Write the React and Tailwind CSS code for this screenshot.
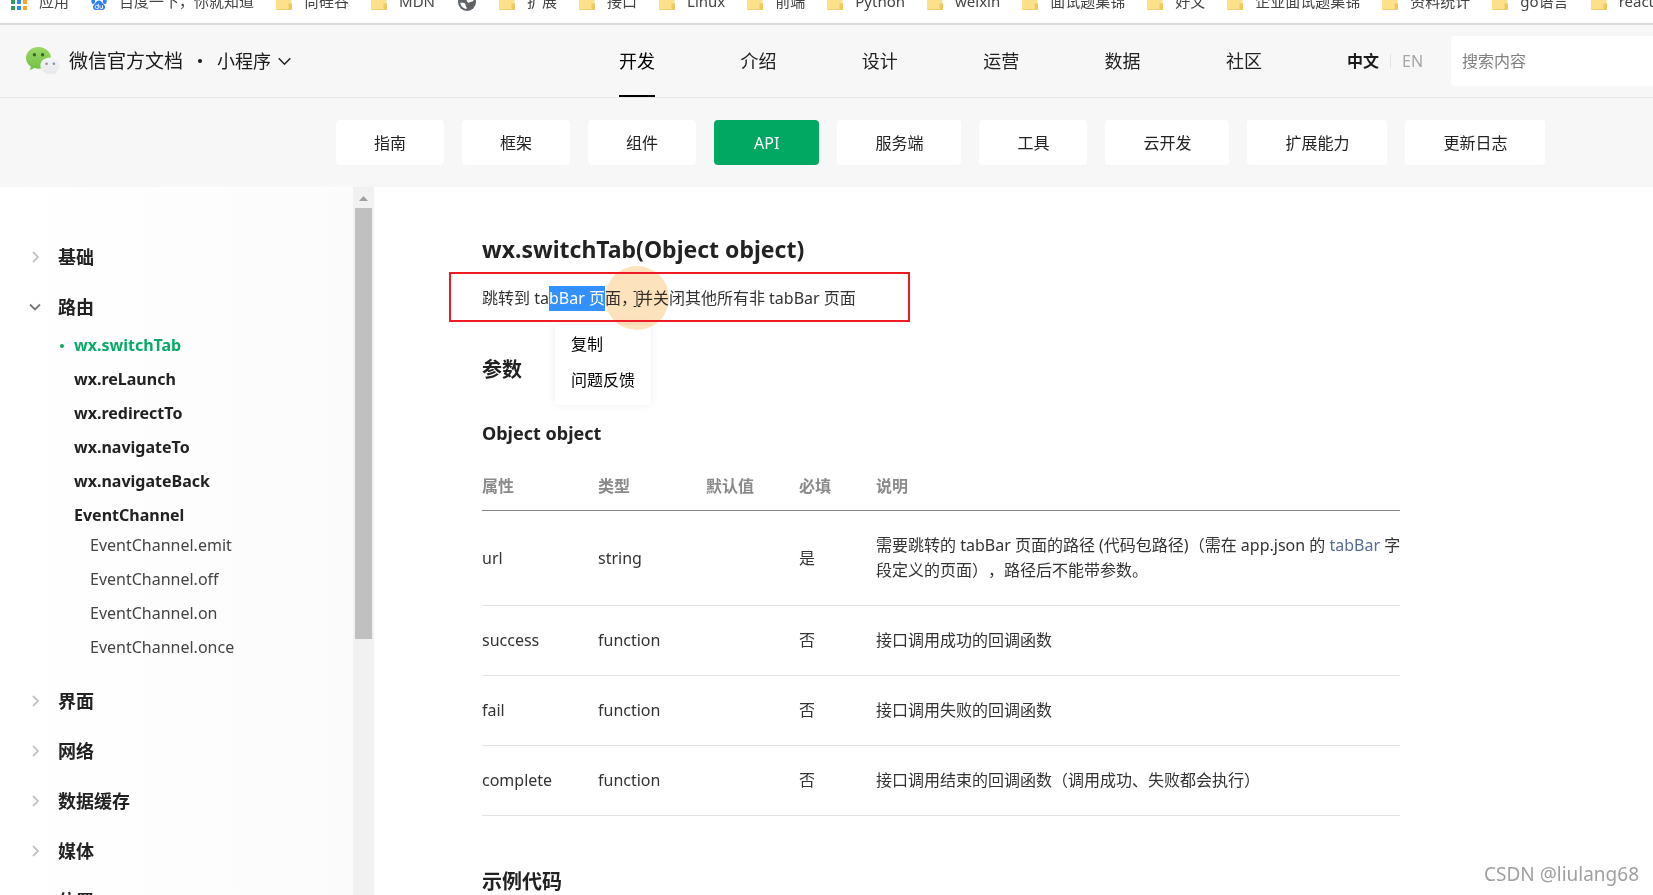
import React from "react";

const bookmarks = [
  { icon: "apps", label: "应用" },
  { icon: "baidu", label: "百度一下，你就知道" },
  { icon: "folder", label: "尚硅谷" },
  { icon: "folder", label: "MDN" },
  { icon: "globe", label: "" },
  { icon: "folder", label: "扩展" },
  { icon: "folder", label: "接口" },
  { icon: "folder", label: "Linux" },
  { icon: "folder", label: "前端" },
  { icon: "folder", label: "Python" },
  { icon: "folder", label: "weixin" },
  { icon: "folder", label: "面试题集锦" },
  { icon: "folder", label: "好文" },
  { icon: "folder", label: "企业面试题集锦" },
  { icon: "folder", label: "资料统计" },
  { icon: "folder", label: "go语言" },
  { icon: "folder", label: "react" },
];

const mainNav = ["开发", "介绍", "设计", "运营", "数据", "社区"];

const subNav = ["指南", "框架", "组件", "API", "服务端", "工具", "云开发", "扩展能力", "更新日志"];

const routeItems = [
  "wx.switchTab",
  "wx.reLaunch",
  "wx.redirectTo",
  "wx.navigateTo",
  "wx.navigateBack",
  "EventChannel",
];

const channelItems = [
  "EventChannel.emit",
  "EventChannel.off",
  "EventChannel.on",
  "EventChannel.once",
];

const laterGroups = ["界面", "网络", "数据缓存", "媒体", "位置"];

const params = [
  {
    name: "url",
    type: "string",
    required: "是",
    desc: (
      <>
        <span className="whitespace-nowrap">
          需要跳转的 tabBar 页面的路径 (代码包路径)（需在 app.json 的{" "}
          <a href="#tabBar" className="text-[#576b95]">tabBar</a> 字
        </span>
        <br />
        段定义的页面），路径后不能带参数。
      </>
    ),
  },
  { name: "success", type: "function", required: "否", desc: "接口调用成功的回调函数" },
  { name: "fail", type: "function", required: "否", desc: "接口调用失败的回调函数" },
  { name: "complete", type: "function", required: "否", desc: "接口调用结束的回调函数（调用成功、失败都会执行）" },
];

function BookmarkIcon({ kind }) {
  if (kind === "apps") {
    const colors = ["#2f9e5b", "#2f9e5b", "#f5a623", "#2f9e5b", "#2b8cf0", "#f5a623", "#2f9e5b", "#2b8cf0", "#f5a623"];
    return (
      <svg width="16" height="16" viewBox="0 0 16 16" aria-hidden="true">
        {colors.map((c, i) => (
          <rect key={i} x={(i % 3) * 6} y={Math.floor(i / 3) * 6} width="4" height="4" fill={c} />
        ))}
      </svg>
    );
  }
  if (kind === "baidu") {
    return (
      <svg width="16" height="16" viewBox="0 0 16 16" fill="#2b7df5" aria-hidden="true">
        <ellipse cx="2.2" cy="7.6" rx="1.9" ry="2.5" />
        <ellipse cx="5.6" cy="3" rx="1.8" ry="2.6" />
        <ellipse cx="10.2" cy="3" rx="1.8" ry="2.6" />
        <ellipse cx="13.8" cy="7.6" rx="1.9" ry="2.5" />
        <path d="M8 6.6c2 0 2.6 1.6 3.8 2.8 1.5 1.4 2.6 2.4 2.2 4.400-.4 1.800-2 2.200-3.500 2.100-1-.1-1.600-.2-2.500-.2s-1.500.1-2.500.2c-1.500.1-3.100-.3-3.500-2.100-.4-2 .7-3 2.200-4.400C5.400 8.200 6 6.600 8 6.600z" />
        <path d="M7.300 9.600v4.800H5.600a1.500 1.500 0 0 1 0-3h1.700M9 11.400v2.200c0 .6.300.8.800.8h1.700v-3" fill="none" stroke="#fff" strokeWidth="0.900" />
      </svg>
    );
  }
  if (kind === "globe") {
    return (
      <svg className="mx-px" width="18" height="18" viewBox="0 0 18 18" aria-hidden="true">
        <circle cx="9" cy="9" r="9" fill="#5f6368" />
        <path d="M2.300 9.500c2 .3 3.800 0 4.900 1.200.9 1 0 2 .9 2.800.6.600.6 1.600.5 2.500-3.400-.3-6-3-6.300-6.500z" fill="#fff" />
        <path d="M8.600 6.800c.2-1.600 1.600-1.400 2.400-2.800.5-.8 1.800-.6 2.600.1 1 1 1.700 2.200 2 3.500-1.500 1.800-3.300.9-4.400 1.900-1 .9-2.800-1-2.600-2.700z" fill="#fff" />
      </svg>
    );
  }
  return (
    <svg width="16" height="16" viewBox="0 0 16 16" aria-hidden="true">
      <path d="M1 0h9l2 2h3.500v14H1a1 1 0 0 1-1-1V1a1 1 0 0 1 1-1z" fill="#fce08a" />
      <path d="M12.500 9.500h3.500V15a1 1 0 0 1-1 1h-3.500l1-1z" fill="#efc75e" />
      <path d="M0 15h12.500v1H1a1 1 0 0 1-1-1z" fill="#f3d072" />
    </svg>
  );
}

function WechatLogo() {
  return (
    <svg width="34" height="28" viewBox="0 0 34 28" aria-hidden="true">
      <defs>
        <linearGradient id="bubbleGreen" x1="0" y1="0" x2="0" y2="1">
          <stop offset="0" stopColor="#9ad766" />
          <stop offset="1" stopColor="#74c044" />
        </linearGradient>
        <linearGradient id="bubbleGray" x1="0" y1="0" x2="0" y2="1">
          <stop offset="0" stopColor="#f3f4f6" />
          <stop offset="1" stopColor="#e6e8ed" />
        </linearGradient>
      </defs>
      <path d="M12.500 0C5.600 0 0 4.900 0 11c0 3.500 1.900 6.600 4.900 8.600L4 23.200l4.300-2.100c1.300.4 2.700.6 4.200.6C19.400 21.700 25 17 25 11S19.400 0 12.500 0z" fill="url(#bubbleGreen)" />
      <circle cx="8.400" cy="7.700" r="1.700" fill="#3c6425" />
      <circle cx="16.600" cy="7.700" r="1.700" fill="#3c6425" />
      <path d="M24 10.500c-5.400 0-9.600 3.600-9.600 8.200s4.200 8.200 9.600 8.200c1.200 0 2.300-.2 3.300-.5l3.400 1.500-.7-2.900c2.200-1.500 3.600-3.800 3.600-6.300 0-4.600-4.200-8.200-9.600-8.200z" fill="url(#bubbleGray)" />
      <circle cx="20.600" cy="16.700" r="1.300" fill="#8d9096" />
      <circle cx="27.900" cy="16.700" r="1.300" fill="#8d9096" />
    </svg>
  );
}

function Chevron({ open = false }) {
  return open ? (
    <svg width="12" height="12" viewBox="0 0 12 12" fill="none" stroke="#777" strokeWidth="1.800" aria-hidden="true">
      <path d="M1 3.500l5 5 5-5" />
    </svg>
  ) : (
    <svg width="12" height="12" viewBox="0 0 12 12" fill="none" stroke="#c4c4c4" strokeWidth="1.800" aria-hidden="true">
      <path d="M4 1l5 5-5 5" />
    </svg>
  );
}

function GroupButton({ label, open = false }) {
  return (
    <button type="button" aria-expanded={open} className="flex h-[50px] w-full items-center gap-[17px] text-left text-lg font-bold text-[#222]">
      <Chevron open={open} />
      {label}
    </button>
  );
}

function Bookmarks() {
  return (
    <nav aria-label="书签" className="h-[25px] shrink-0 overflow-hidden border-b-2 border-[#dadada] bg-white">
      <ul className="-mt-2 flex h-5 items-center gap-[22px] pl-[11px]">
        {bookmarks.map((b, i) => (
          <li key={i} className="shrink-0">
            <a href="#bookmark" aria-label={b.label || "网页"} className="flex items-center gap-3 text-[15px] leading-5 whitespace-nowrap text-[#444]">
              <BookmarkIcon kind={b.icon} />
              {b.label && <span className="pb-0.5">{b.label}</span>}
            </a>
          </li>
        ))}
      </ul>
    </nav>
  );
}

function Header() {
  return (
    <header className="flex h-[73px] shrink-0 items-center border-b border-[#e7e7e7] bg-[#f7f7f7]">
      <div className="flex w-[619px] shrink-0 items-center pl-[26px]">
        <WechatLogo />
        <a href="#home" className="ml-[9px] text-[19px] text-[#1a1a1a]">微信官方文档</a>
        <span className="mx-[15px] size-1 rounded-full bg-[#1a1a1a]" />
        <button type="button" className="flex items-center gap-[7px] text-lg text-[#1a1a1a]">
          小程序
          <svg width="13" height="9" viewBox="0 0 13 9" fill="none" stroke="#222" strokeWidth="1.500" aria-hidden="true">
            <path d="M0.700 1.200l5.800 6 5.800-6" />
          </svg>
        </button>
      </div>
      <nav className="flex w-[643px] shrink-0 justify-between self-stretch">
        {mainNav.map((n, i) => (
          <a
            key={n}
            href="#nav"
            className={
              i === 0
                ? "flex items-center border-y-2 border-t-transparent border-b-black text-lg text-black"
                : "flex items-center border-y-2 border-transparent text-lg text-[#222]"
            }
          >
            {n}
          </a>
        ))}
      </nav>
      <div className="flex w-[189px] shrink-0 items-center pl-[85px] text-base">
        <button type="button" className="font-bold text-[#1a1a1a]">中文</button>
        <span className="mx-[11px] h-3.5 w-px bg-[#e3e3e3]" />
        <button type="button" className="text-[#a6a6a6]">EN</button>
      </div>
      <input
        type="search"
        aria-label="搜索内容"
        placeholder="搜索内容"
        className="h-[50px] min-w-0 flex-1 rounded-l bg-white px-[11px] text-base placeholder:text-[#808080]"
      />
    </header>
  );
}

function SubNav() {
  return (
    <nav className="flex h-[89px] shrink-0 items-center gap-[18px] bg-[#f7f7f7] pl-[336px]">
      {subNav.map((s) => (
        <a
          key={s}
          href="#section"
          className={
            s === "API"
              ? "flex h-[45px] shrink-0 items-center rounded bg-[#00a862] px-10 text-base text-white"
              : "flex h-[45px] shrink-0 items-center rounded bg-white px-[38px] text-base text-[#222]"
          }
        >
          {s}
        </a>
      ))}
    </nav>
  );
}

function Sidebar() {
  return (
    <aside className="flex w-[374px] shrink-0 overflow-hidden bg-linear-to-r from-white to-[#fbfbfb]">
      <nav className="min-w-0 flex-1 pt-[45px] pl-[29px]">
        <GroupButton label="基础" />
        <GroupButton label="路由" open />
        <ul className="-mt-1 pl-[45px] text-base leading-[34px] font-bold text-[#222]">
          {routeItems.map((r, i) => (
            <li key={r} className="relative">
              {i === 0 && <span className="absolute top-4 -left-3.5 size-1 rounded-full bg-[#07ab66]" />}
              <a href="#api" className={i === 0 ? "text-[#07ab66]" : ""}>{r}</a>
            </li>
          ))}
        </ul>
        <ul className="-mt-1 pb-3 pl-[61px] text-base leading-[34px] text-[#444]">
          {channelItems.map((c) => (
            <li key={c}>
              <a href="#channel">{c}</a>
            </li>
          ))}
        </ul>
        {laterGroups.map((g) => (
          <GroupButton key={g} label={g} />
        ))}
      </nav>
      <div className="flex w-[21px] flex-col items-center bg-[#f1f1f1]" aria-hidden="true">
        <svg width="17" height="21" viewBox="0 0 17 21">
          <path d="M4 14l4.500-5 4.500 5z" fill="#a0a0a0" />
        </svg>
        <div className="h-[431px] w-[17px] bg-[#c0c0c0]" />
      </div>
    </aside>
  );
}

function Article() {
  return (
    <main className="min-w-0 flex-1 overflow-hidden bg-white pt-[45px] pl-[108px] text-[#222]">
      <div className="max-w-[918px]">
        <h1 className="text-[23px] leading-[34px] font-bold">wx.switchTab(Object object)</h1>
        <div className="relative mt-5 text-base leading-[25px] text-[#333]">
          <p>
            跳转到 ta<span className="inline-block bg-[#3390ff] text-white">bBar 页</span>面，并关闭其他所有非 tabBar 页面
          </p>
          <div className="absolute top-[39px] left-[73px] flex flex-col items-start gap-[11px] rounded bg-white px-4 pt-[7px] pb-3 whitespace-nowrap text-black shadow-[0_0_10px_rgba(0,0,0,0.070)]">
            <button type="button">复制</button>
            <button type="button">问题反馈</button>
          </div>
          <div className="absolute -top-5 left-[123px] size-16 rounded-full bg-[#fcd29b]/65 mix-blend-multiply" />
          <div className="absolute -top-3.5 -left-[33px] h-[50px] w-[461px] border-2 border-[#ed1c24]" />
          <svg className="absolute top-1 left-[151px]" width="8" height="18" viewBox="0 0 8 18" fill="none" stroke="#222" aria-hidden="true">
            <path d="M0.500 1.500h2.500l1 1 1-1h2.500M4 2.500v13M0.500 16.500h2.500l1-1 1 1h2.500" />
          </svg>
        </div>
        <h2 className="mt-11 text-xl leading-[30px] font-bold">参数</h2>
        <h3 className="mt-[35px] text-lg leading-[26px] font-bold">Object object</h3>
        <table className="mt-[15px] w-full table-fixed border-separate border-spacing-0 text-left text-base leading-[25px] text-[#333]">
          <colgroup>
            <col className="w-[116px]" />
            <col className="w-[108px]" />
            <col className="w-[93px]" />
            <col className="w-[77px]" />
            <col />
          </colgroup>
          <thead>
            <tr>
              {["属性", "类型", "默认值", "必填", "说明"].map((h) => (
                <th key={h} className="border-b border-[#888] pt-[13px] pb-[11px] font-bold text-[#8a8a8a]">{h}</th>
              ))}
            </tr>
          </thead>
          <tbody>
            {params.map((p) => (
              <tr key={p.name}>
                <td className="border-b border-[#e2e2e2] py-[22px]">{p.name}</td>
                <td className="border-b border-[#e2e2e2] py-[22px]">{p.type}</td>
                <td className="border-b border-[#e2e2e2] py-[22px]" />
                <td className="border-b border-[#e2e2e2] py-[22px]">{p.required}</td>
                <td className="border-b border-[#e2e2e2] py-[22px]">{p.desc}</td>
              </tr>
            ))}
          </tbody>
        </table>
        <h2 className="mt-[51px] text-xl leading-[30px] font-bold">示例代码</h2>
      </div>
    </main>
  );
}

export default function App() {
  return (
    <div className="relative flex h-screen flex-col overflow-hidden bg-white font-['Noto_Sans','Noto_Sans_CJK_SC',sans-serif] [text-spacing-trim:space-all]" lang="zh-CN">
      <Bookmarks />
      <Header />
      <SubNav />
      <div className="flex min-h-0 flex-1">
        <Sidebar />
        <Article />
      </div>
      <div className="absolute right-3.5 bottom-1.5 text-[19px] leading-[30px] text-[#a0a0a0] [text-shadow:1px_1px_0_#ffffff]">CSDN @liulang68</div>
    </div>
  );
}
